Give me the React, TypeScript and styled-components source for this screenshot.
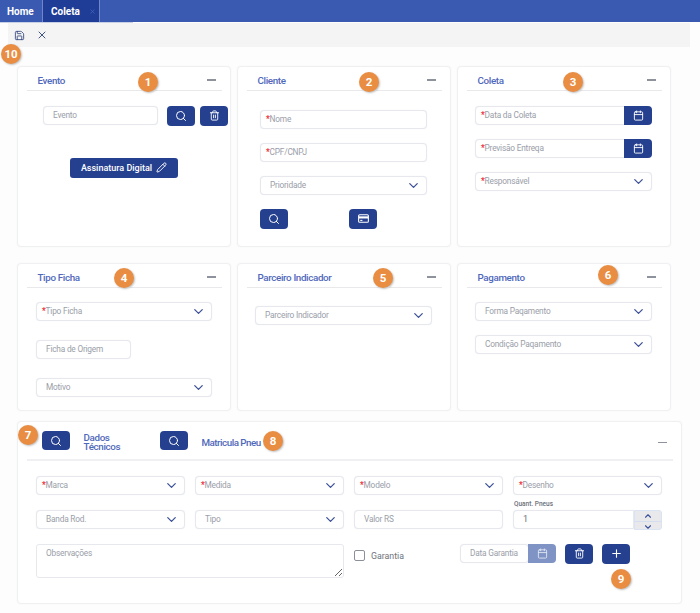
import React from "react";
import styled, { createGlobalStyle } from "styled-components";
import {
  Calendar,
  ChevronDown,
  ChevronUp,
  Pencil,
  Plus,
  Save,
  Search,
  Trash2,
  X,
} from "lucide-react";

const GlobalStyle = createGlobalStyle`
  html, body {
    margin: 0;
    padding: 0;
    background: #fdfdfd;
    font-family: "Roboto", "Liberation Sans", sans-serif;
  }
  * { box-sizing: border-box; }
`;

const navy = "#25408f";

const Page = styled.div`
  width: 700px;
  height: 613px;
  overflow: hidden;
`;

const TabBar = styled.div`
  height: 22px;
  background: #3a5ab2;
  display: flex;
  color: #fff;
  font-size: 10px;
  font-weight: 700;
`;

const Tab = styled.div<{ $active?: boolean; $width: number }>`
  width: ${(p) => p.$width}px;
  margin-right: 1px;
  display: flex;
  align-items: center;
  padding-left: ${(p) => (p.$active ? 8 : 7)}px;
  background: ${(p) => (p.$active ? "#1f3d96" : "transparent")};
  border-right: ${(p) => (p.$active ? "1px solid #6f86c8" : "none")};
  border-left: ${(p) => (p.$active ? "1px solid #6f86c8" : "none")};
`;

const TabClose = styled.span`
  margin-left: 9px;
  display: flex;
  color: #4e6cc0;
`;

const TabLine = styled.div`
  height: 1px;
  width: 133px;
  background: #c8d0e6;
`;

const Toolbar = styled.div`
  position: relative;
  height: 24px;
  margin: 0 10px 0 8px;
  background: #f4f4f4;
  display: flex;
  align-items: center;
  gap: 11px;
  padding-left: 6px;
  color: #2c3f7a;
`;

const Cards = styled.div`
  margin: 19px 0 0 17px;
  display: grid;
  grid-template-columns: repeat(3, 214px);
  grid-template-rows: 181px 148px;
  column-gap: 6px;
  row-gap: 16px;
`;

const Card = styled.section`
  position: relative;
  background: #fff;
  border: 1px solid #f0f0f3;
  border-radius: 4px;
  box-shadow: 0 0 2px rgba(60, 70, 100, 0.05);
`;

const WideCard = styled(Card)`
  width: 665px;
  height: 183px;
  margin: 10px 0 0 17px;
`;

const CardHeader = styled.header`
  height: 24px;
  margin: 0 8.5px;
  padding: 3px 6px 0 11px;
  border-bottom: 1px solid #e9e9ec;
  display: flex;
  align-items: center;
  justify-content: space-between;
`;

const WideHeader = styled(CardHeader)`
  height: 39px;
  padding: 0 6px 0 15px;
  border-bottom-width: 2px;
  border-bottom-color: #f0f0f2;
  justify-content: flex-start;
`;

const Title = styled.h3`
  margin: 0;
  font-size: 9.8px;
  line-height: 9px;
  letter-spacing: -0.35px;
  font-weight: 500;
  color: #4f68bb;
`;

const DadosTitle = styled(Title)`
  width: 44px;
  margin: 3px 32px 0 14px;
`;

const MatriculaTitle = styled(Title)`
  margin: 3px 0 0 14px;
  letter-spacing: -0.5px;
  white-space: nowrap;
`;

const Collapse = styled.span`
  width: 9px;
  height: 1.5px;
  background: #8d929c;
`;

const WideCollapse = styled(Collapse)`
  margin: 4px 0 0 auto;
`;

const Body = styled.div<{ $top: number; $side: number; $right?: number; $gap: number }>`
  padding: ${(p) => p.$top}px ${(p) => p.$right ?? p.$side}px 0 ${(p) => p.$side}px;
  display: flex;
  flex-direction: column;
  gap: ${(p) => p.$gap}px;
`;

const FieldRow = styled.div`
  display: flex;
  align-items: center;
`;

const Field = styled.div<{ $width?: number }>`
  height: 19px;
  width: ${(p) => (p.$width ? `${p.$width}px` : "100%")};
  flex: ${(p) => (p.$width ? "none" : "1 1 auto")};
  padding: 0 5px 1px 9px;
  background: #fff;
  border: 1px solid #e6e8ee;
  border-radius: 4px;
  box-shadow: 0 0 1px rgba(90, 100, 130, 0.15);
  display: flex;
  align-items: center;
  justify-content: space-between;
  font-size: 8.3px;
  letter-spacing: -0.2px;
  color: #9a9ea8;
  white-space: nowrap;
`;

const RequiredField = styled(Field)`
  padding-left: 5px;
`;

const Star = styled.span`
  color: #ee2a35;
  font-weight: 700;
`;

const Chevron = styled(ChevronDown)`
  color: #3c5099;
  flex: none;
`;

const Addon = styled.div<{ $light?: boolean }>`
  width: 28px;
  height: 19px;
  flex: none;
  margin-left: -1px;
  background: ${(p) => (p.$light ? "#7f93c4" : navy)};
  color: ${(p) => (p.$light ? "#dfe5f3" : "#fff")};
  border-radius: 0 4px 4px 0;
  display: flex;
  align-items: center;
  justify-content: center;
`;

const GroupField = styled(RequiredField)`
  border-radius: 4px 0 0 4px;
`;

const IconButton = styled.button<{ $left?: number }>`
  width: 28px;
  height: 19.5px;
  flex: none;
  margin: 0 0 0 ${(p) => p.$left ?? 0}px;
  padding: 0;
  background: ${navy};
  color: #fff;
  border: none;
  border-radius: 4px;
  display: flex;
  align-items: center;
  justify-content: center;
`;

const SignButton = styled.button`
  width: 108px;
  height: 20px;
  margin: 32px 0 0 27px;
  padding: 0;
  background: ${navy};
  color: #fff;
  border: none;
  border-radius: 3px;
  display: flex;
  align-items: center;
  justify-content: center;
  gap: 4px;
  font-family: inherit;
  font-size: 9px;
  font-weight: 500;
`;

const TechGrid = styled.div`
  padding: 15px 19px 0 18px;
  display: grid;
  grid-template-columns: repeat(4, 149px);
  grid-template-rows: 19px 19px 34px;
  column-gap: 10px;
  row-gap: 15px;
`;

const Notes = styled.textarea`
  grid-column: span 2;
  height: 34px;
  margin: 0;
  padding: 3px 9px;
  border: 1px solid #e6e8ee;
  border-radius: 3px;
  font-family: inherit;
  font-size: 8.3px;
  letter-spacing: -0.2px;
  outline: none;
  &::placeholder {
    color: #9a9ea8;
  }
`;

const NumberCell = styled.div`
  position: relative;
  display: flex;
`;

const SmallLabel = styled.label`
  position: absolute;
  left: 1px;
  top: -10px;
  font-size: 6.5px;
  font-weight: 500;
  color: #6c707a;
`;

const NumberField = styled(Field)`
  color: #6c707a;
  font-size: 9px;
  border-radius: 4px 0 0 4px;
`;

const Spinner = styled.div`
  width: 28px;
  height: 20px;
  flex: none;
  border: 1px solid #d9e3f3;
  border-radius: 0 3px 3px 0;
  background: #e9e9ec;
  color: #3c5099;
  display: grid;
  grid-template-rows: 1fr 1fr;
`;

const SpinPart = styled.span`
  display: flex;
  align-items: center;
  justify-content: center;
  & + & {
    border-top: 1px solid #d3dff0;
  }
`;

const ActionsRow = styled.div`
  grid-column: span 2;
  display: flex;
  align-items: flex-start;
`;

const CheckLabel = styled.div`
  width: 106px;
  height: 19px;
  flex: none;
  display: flex;
  align-items: center;
  gap: 6px;
  margin-top: 2px;
  font-size: 8.8px;
  color: #6f737c;
`;

const CheckBox = styled.span`
  width: 11px;
  height: 11px;
  border: 1px solid #8b8f97;
  border-radius: 2px;
  background: #fff;
`;

const Badge = styled.div<{ $left: number; $top: number }>`
  position: absolute;
  left: ${(p) => p.$left}px;
  top: ${(p) => p.$top}px;
  width: 20px;
  height: 20px;
  border-radius: 50%;
  background: #e88d42;
  color: #fff;
  font-size: 11.5px;
  font-weight: 700;
  display: flex;
  align-items: center;
  justify-content: center;
  box-shadow: 1px 1px 2px rgba(70, 70, 70, 0.35), 1px 1px 0 #fff;
  z-index: 2;
`;

function CardIcon() {
  return (
    <svg width="13" height="13" viewBox="0 0 24 24" fill="none" stroke="currentColor" strokeWidth="2">
      <rect x="3" y="5" width="18" height="14" rx="2" />
      <path d="M3 10h18" strokeWidth="4" />
      <path d="M6 15.5h4" />
    </svg>
  );
}

function Select({ label, required }: { label: string; required?: boolean }) {
  const Box = required ? RequiredField : Field;
  return (
    <Box>
      <span>
        {required && <Star>*</Star>}
        {label}
      </span>
      <Chevron size={15} strokeWidth={2} />
    </Box>
  );
}

function Text({ label, required, width }: { label: string; required?: boolean; width?: number }) {
  const Box = required ? RequiredField : Field;
  return (
    <Box $width={width}>
      <span>
        {required && <Star>*</Star>}
        {label}
      </span>
    </Box>
  );
}

function DateField({ label }: { label: string }) {
  return (
    <FieldRow>
      <GroupField>
        <span>
          <Star>*</Star>
          {label}
        </span>
      </GroupField>
      <Addon>
        <Calendar size={11} />
      </Addon>
    </FieldRow>
  );
}

export default function App() {
  return (
    <Page>
      <GlobalStyle />
      <TabBar>
        <Tab $width={41}>Home</Tab>
        <Tab $width={58} $active>
          Coleta
          <TabClose>
            <X size={7} strokeWidth={2} />
          </TabClose>
        </Tab>
      </TabBar>
      <TabLine />
      <Toolbar>
        <Save size={11} strokeWidth={1.8} />
        <X size={12} strokeWidth={1.8} />
        <Badge $left={-7} $top={21}>10</Badge>
      </Toolbar>

      <Cards>
        <Card>
          <CardHeader>
            <Title>Evento</Title>
            <Collapse />
          </CardHeader>
          <Badge $left={120} $top={5}>1</Badge>
          <Body $top={15} $side={25} $gap={0}>
            <FieldRow>
              <Text label="Evento" width={115} />
              <IconButton $left={9}>
                <Search size={12} />
              </IconButton>
              <IconButton $left={5}>
                <Trash2 size={11} />
              </IconButton>
            </FieldRow>
            <SignButton>
              Assinatura Digital
              <Pencil size={11} />
            </SignButton>
          </Body>
        </Card>

        <Card>
          <CardHeader>
            <Title>Cliente</Title>
            <Collapse />
          </CardHeader>
          <Badge $left={121} $top={5}>2</Badge>
          <Body $top={19} $side={22} $right={23} $gap={14}>
            <Text label="Nome" required />
            <Text label="CPF/CNPJ" required />
            <Select label="Prioridade" />
            <FieldRow>
              <IconButton>
                <Search size={12} />
              </IconButton>
              <IconButton $left={61}>
                <CardIcon />
              </IconButton>
            </FieldRow>
          </Body>
        </Card>

        <Card>
          <CardHeader>
            <Title>Coleta</Title>
            <Collapse />
          </CardHeader>
          <Badge $left={105} $top={5}>3</Badge>
          <Body $top={15} $side={17} $right={18} $gap={14}>
            <DateField label="Data da Coleta" />
            <DateField label="Previsão Entreqa" />
            <Select label="Responsável" required />
          </Body>
        </Card>

        <Card>
          <CardHeader>
            <Title>Tipo Ficha</Title>
            <Collapse />
          </CardHeader>
          <Badge $left={96} $top={4}>4</Badge>
          <Body $top={14} $side={18} $gap={19}>
            <Select label="Tipo Ficha" required />
            <Text label="Ficha de Origem" width={95} />
            <Select label="Motivo" />
          </Body>
        </Card>

        <Card>
          <CardHeader>
            <Title>Parceiro Indicador</Title>
            <Collapse />
          </CardHeader>
          <Badge $left={135} $top={4}>5</Badge>
          <Body $top={18} $side={17} $right={18} $gap={14}>
            <Select label="Parceiro Indicador" />
          </Body>
        </Card>

        <Card>
          <CardHeader>
            <Title>Pagamento</Title>
            <Collapse />
          </CardHeader>
          <Badge $left={140} $top={1}>6</Badge>
          <Body $top={14} $side={17} $right={18} $gap={14}>
            <Select label="Forma Paqamento" />
            <Select label="Condição Paqamento" />
          </Body>
        </Card>
      </Cards>

      <WideCard>
        <WideHeader>
          <IconButton>
            <Search size={12} />
          </IconButton>
          <DadosTitle>Dados Técnicos</DadosTitle>
          <IconButton>
            <Search size={12} />
          </IconButton>
          <MatriculaTitle>Matricula Pneu</MatriculaTitle>
          <WideCollapse />
        </WideHeader>
        <Badge $left={0} $top={3}>7</Badge>
        <Badge $left={245} $top={9}>8</Badge>
        <Badge $left={593} $top={147}>9</Badge>
        <TechGrid>
          <Select label="Marca" required />
          <Select label="Medida" required />
          <Select label="Modelo" required />
          <Select label="Desenho" required />
          <Select label="Banda Rod." />
          <Select label="Tipo" />
          <Text label="Valor RS" />
          <NumberCell>
            <SmallLabel>Quant. Pneus</SmallLabel>
            <NumberField>1</NumberField>
            <Spinner>
              <SpinPart>
                <ChevronUp size={10} strokeWidth={2.6} />
              </SpinPart>
              <SpinPart>
                <ChevronDown size={10} strokeWidth={2.6} />
              </SpinPart>
            </Spinner>
          </NumberCell>
          <Notes placeholder="Observações" />
          <ActionsRow>
            <CheckLabel>
              <CheckBox />
              Garantia
            </CheckLabel>
            <Field $width={69}>
              <span>Data Garantia</span>
            </Field>
            <Addon $light>
              <Calendar size={11} />
            </Addon>
            <IconButton $left={9}>
              <Trash2 size={11} />
            </IconButton>
            <IconButton $left={9}>
              <Plus size={13} />
            </IconButton>
          </ActionsRow>
        </TechGrid>
      </WideCard>
    </Page>
  );
}
